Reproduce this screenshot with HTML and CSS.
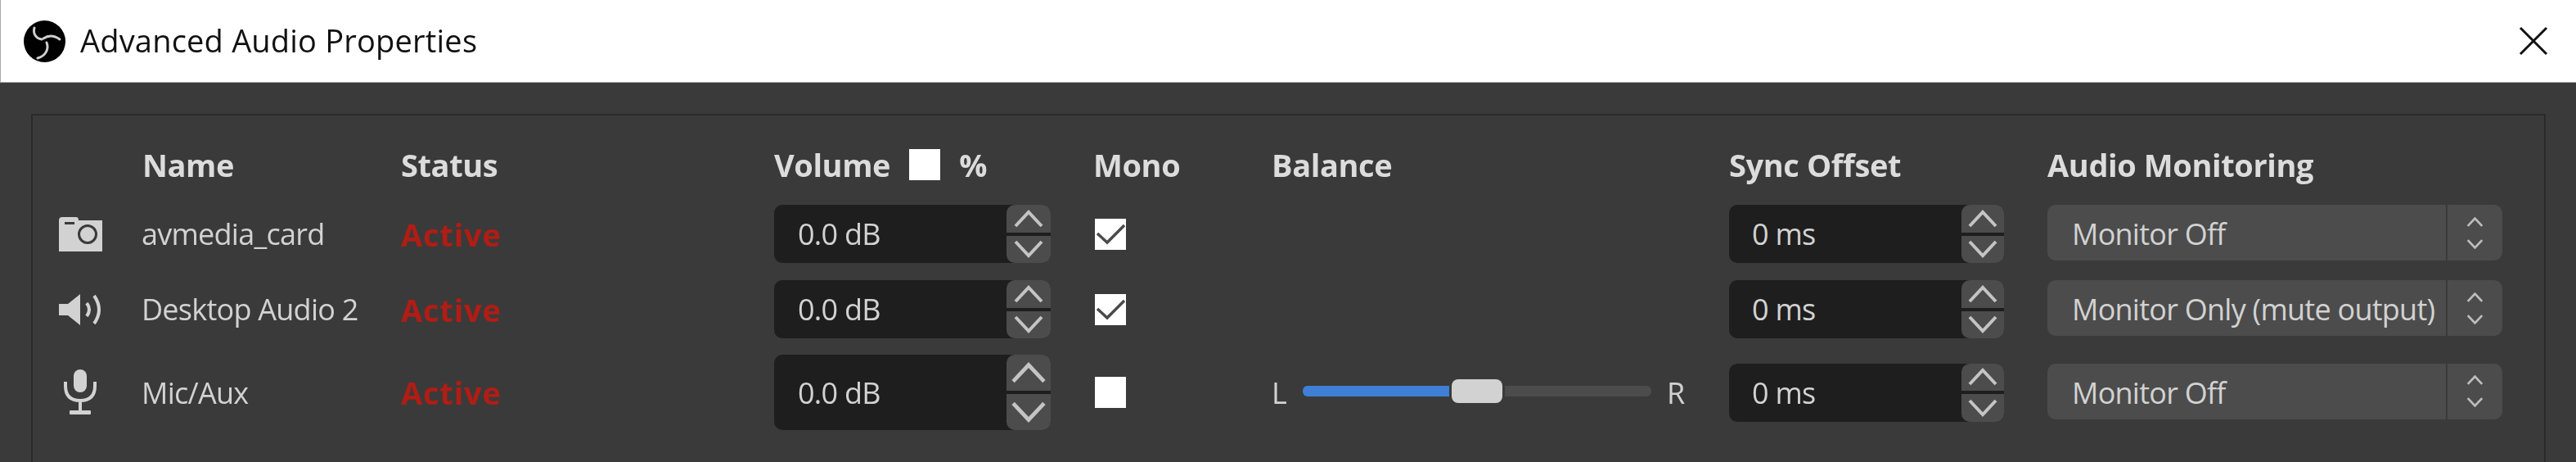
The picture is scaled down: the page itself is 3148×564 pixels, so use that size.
FILE: index.html
```html
<!DOCTYPE html>
<html lang="en">

<head>
  <meta charset="UTF-8">
  <title>Advanced Audio Properties</title>
  <link rel="stylesheet" href="styles.css">
</head>

<body>
  <svg class="defs" width="0" height="0">
    <symbol id="up" viewBox="0 0 36 22"><path d="M2 20 18 3 34 20" /></symbol>
    <symbol id="down" viewBox="0 0 36 22"><path d="M2 2 18 19 34 2" /></symbol>
  </svg>

  <header class="titlebar">
    <svg class="logo" viewBox="0 0 51 51">
      <circle cx="25.5" cy="25.5" r="25.5" fill="#000" />
      <path d="M13 9C11 16 15 22 22 23M24 22C30 18 37 18 44 23M28 27C31 35 27 43 17 46" fill="none" stroke="#cfcfcf" stroke-width="3" stroke-linecap="round" />
    </svg>
    <span class="title">Advanced Audio Properties</span>
    <svg class="close" viewBox="0 0 36 36">
      <path d="M2 2 34 34M34 2 2 34" fill="none" stroke="#111" stroke-width="3" />
    </svg>
  </header>

  <main class="content">
    <div class="panel">
      <div class="grid">
        <!-- header row -->
        <div class="head col-name">Name</div>
        <div class="head">Status</div>
        <div class="head vol-head"><span>Volume</span><span class="check"></span><span>%</span></div>
        <div class="head">Mono</div>
        <div class="head">Balance</div>
        <div class="head">Sync Offset</div>
        <div class="head">Audio Monitoring</div>

        <!-- avmedia_card -->
        <svg class="icon" viewBox="0 0 54 42">
          <path fill-rule="evenodd" d="M1 42V4Q1 0 5 0H22Q25 0 25 4H54V42ZM8 6V9H20V6ZM36 9A12 12 0 1 0 36.01 33 12 12 0 1 0 36 9ZM36 12A9 9 0 1 1 35.99 30 9 9 0 1 1 36 12Z" />
        </svg>
        <div class="name">avmedia_card</div>
        <div class="status">Active</div>
        <div class="spin vol"><span class="value">0.0 dB</span>
          <div class="btns"><button><svg><use href="#up" /></svg></button><button><svg><use href="#down" /></svg></button></div>
        </div>
        <span class="check"><svg viewBox="0 0 38 38"><path d="M3 18 15 29 36 8" /></svg></span>
        <div></div>
        <div class="spin sync"><span class="value">0 ms</span>
          <div class="btns"><button><svg><use href="#up" /></svg></button><button><svg><use href="#down" /></svg></button></div>
        </div>
        <div class="select"><span class="value">Monitor Off</span>
          <div class="arrows"><svg><use href="#up" /></svg><svg><use href="#down" /></svg></div>
        </div>

        <!-- Desktop Audio 2 -->
        <svg class="icon" viewBox="0 0 54 40">
          <path d="M1 13H12L27 1V39L12 27H1Z" />
          <path class="wave" d="M35 12Q41 20 35 28M44 3Q56 20 44 37" />
        </svg>
        <div class="name">Desktop Audio 2</div>
        <div class="status">Active</div>
        <div class="spin vol"><span class="value">0.0 dB</span>
          <div class="btns"><button><svg><use href="#up" /></svg></button><button><svg><use href="#down" /></svg></button></div>
        </div>
        <span class="check"><svg viewBox="0 0 38 38"><path d="M3 18 15 29 36 8" /></svg></span>
        <div></div>
        <div class="spin sync"><span class="value">0 ms</span>
          <div class="btns"><button><svg><use href="#up" /></svg></button><button><svg><use href="#down" /></svg></button></div>
        </div>
        <div class="select"><span class="value">Monitor Only (mute output)</span>
          <div class="arrows"><svg><use href="#up" /></svg><svg><use href="#down" /></svg></div>
        </div>

        <!-- Mic/Aux -->
        <svg class="icon mic" viewBox="0 0 42 56">
          <rect x="13" y="0" width="16" height="28" rx="8" />
          <path class="wave" d="M3 15V20Q3 38 21 38Q39 38 39 20V15M21 38V51" />
          <rect x="8" y="50" width="26" height="5" rx="1" />
        </svg>
        <div class="name">Mic/Aux</div>
        <div class="status">Active</div>
        <div class="spin vol tall"><span class="value">0.0 dB</span>
          <div class="btns"><button><svg><use href="#up" /></svg></button><button><svg><use href="#down" /></svg></button></div>
        </div>
        <span class="check"></span>
        <div class="balance">
          <span class="side">L</span>
          <div class="slider">
            <div class="fill"></div>
            <div class="handle"></div>
            <div class="rest"></div>
          </div>
          <span class="side">R</span>
        </div>
        <div class="spin sync"><span class="value">0 ms</span>
          <div class="btns"><button><svg><use href="#up" /></svg></button><button><svg><use href="#down" /></svg></button></div>
        </div>
        <div class="select"><span class="value">Monitor Off</span>
          <div class="arrows"><svg><use href="#up" /></svg><svg><use href="#down" /></svg></div>
        </div>
      </div>
    </div>
  </main>
</body>

</html>
```

FILE: styles.css
```css
html,
body {
  margin: 0;
  padding: 0;
  height: 564px;
  overflow: hidden;
}

body {
  font-family: "Open Sans", sans-serif;
  font-size: 36px;
  letter-spacing: -0.75px;
  color: #d2d2d2;
  background-color: #3a3a3a;
}

.defs {
  position: absolute;
}

.titlebar {
  display: flex;
  align-items: center;
  height: 100px;
  padding: 0 34px 0 28px;
  background: white;
  border-left: 1px solid #a8a8a8;
  border-bottom: 1px solid #a8a8a8;
}

.logo {
  width: 51px;
  height: 51px;
  flex: none;
}

.title {
  margin: 0 0 3px 18px;
  color: #111;
  font-size: 38px;
  letter-spacing: 0.2px;
}

.close {
  width: 36px;
  height: 36px;
  margin-left: auto;
}

.logo,
.title,
.close,
.grid {
  filter: blur(0.6px);
}

.content {
  padding: 38px 37px 0 38px;
}

.panel {
  height: 500px;
  padding: 41px 0 0 31px;
  border: 2px solid #2a2a2a;
}

.grid {
  display: grid;
  grid-template-columns: 103px 316px 456px 390px 218px 559px 389px 556px;
  grid-template-rows: 47px 71px 71px 90px;
  row-gap: 21px;
  align-items: center;
}

.head {
  align-self: start;
  line-height: 38px;
  font-weight: 700;
  font-size: 38px;
  letter-spacing: -0.4px;
  color: #dcdcdc;
  white-space: nowrap;
}

.col-name {
  grid-column: 2;
}

.vol-head {
  display: flex;
  align-items: center;
  gap: 23px;
}

.icon {
  width: 54px;
  height: 42px;
  fill: #d2d2d2;
}

.icon .wave {
  fill: none;
  stroke: #d2d2d2;
  stroke-width: 4;
}

.mic {
  width: 42px;
  height: 56px;
  margin-left: 6px;
}

.name {
  margin-left: -1px;
  white-space: nowrap;
}

.status {
  color: #b01d15;
  font-size: 38px;
  font-weight: 700;
  letter-spacing: 0.8px;
}

.check {
  display: block;
  width: 38px;
  height: 38px;
  background: white;
}

.grid > .check {
  margin-left: 2px;
}

.check svg {
  display: block;
  width: 38px;
  height: 38px;
  fill: none;
  stroke: #4a4a4a;
  stroke-width: 3.5;
}

.spin {
  display: flex;
  height: 71px;
  background: #1e1e1e;
  border-radius: 10px;
}

.vol {
  width: 338px;
}

.sync {
  width: 336px;
}

.tall {
  height: 92px;
}

.spin .value {
  flex: 1;
  align-self: center;
  padding-left: 29px;
}

.sync .value {
  padding-left: 28px;
}

.btns {
  display: flex;
  flex-direction: column;
  width: 54px;
  gap: 4px;
}

.sync .btns {
  width: 52px;
}

.btns button {
  display: flex;
  flex: 1;
  align-items: center;
  justify-content: center;
  padding: 0;
  border: none;
  background: #4c4c4c;
}

.btns button:first-child {
  border-radius: 10px 10px 0 0;
}

.btns button:last-child {
  border-radius: 0 0 10px 10px;
}

.btns svg {
  width: 36px;
  height: 22px;
  fill: none;
  stroke: #c4c4c4;
  stroke-width: 4;
}

.tall .btns svg {
  width: 46px;
  height: 26px;
}

.select {
  display: flex;
  align-items: center;
  height: 68px;
  margin-bottom: 3px;
  background: #4c4c4c;
  border-radius: 10px;
}

.select .value {
  flex: 1;
  padding: 3px 0 0 30px;
  white-space: nowrap;
}

.arrows {
  display: flex;
  flex-direction: column;
  align-items: center;
  justify-content: center;
  gap: 15px;
  width: 69px;
  height: 68px;
  border-left: 2px solid #3a3a3a;
  box-sizing: border-box;
}

.arrows svg {
  width: 21px;
  height: 12px;
  fill: none;
  stroke: #bdbdbd;
  stroke-width: 5;
}

.balance {
  display: flex;
  align-items: center;
  gap: 19px;
  grid-column: 6;
}

.side {
  width: 19px;
}

.slider {
  display: flex;
  align-items: center;
  width: 426px;
  height: 30px;
  margin-bottom: 4px;
}

.fill {
  width: 179px;
  height: 13px;
  background: #3f7fd6;
  border-radius: 6px 0 0 6px;
}

.handle {
  width: 62px;
  height: 29px;
  margin: 0 3px;
  background: #d2d2d2;
  border-radius: 8px;
}

.rest {
  flex: 1;
  height: 13px;
  background: #4c4c4c;
  border-radius: 0 6px 6px 0;
}
```
